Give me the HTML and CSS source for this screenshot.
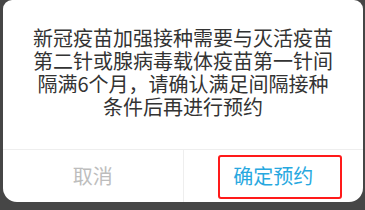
FILE: index.html
```html
<!DOCTYPE html>
<html lang="zh-CN">
<head>
<meta charset="utf-8">
<link rel="stylesheet" href="styles.css">
</head>
<body>
<div class="screen">
  <div class="dialog">
    <div class="message">新冠疫苗加强接种需要与灭活疫苗<br>第二针或腺病毒载体疫苗第一针间<br>隔满6个月，请确认满足间隔接种<br>条件后再进行预约</div>
    <div class="actions">
      <div class="btn cancel">取消</div>
      <div class="btn confirm">确定预约<span class="highlight"></span></div>
    </div>
  </div>
</div>
</body>
</html>
```

FILE: styles.css
```css
html, body {
  margin: 0;
  padding: 0;
}
body {
  width: 365px;
  height: 210px;
  background: #464646;
  font-family: "Noto Sans CJK SC", "Noto Sans", sans-serif;
  overflow: hidden;
}
.screen {
  padding: 0 2px 0 3px;
  height: 210px;
  box-sizing: border-box;
}
.dialog {
  background: #ffffff;
  height: 202px;
  border-radius: 9px 9px 14px 14px;
  display: flex;
  flex-direction: column;
}
.message {
  padding-top: 26px;
  height: 149px;
  box-sizing: border-box;
  font-size: 20px;
  line-height: 23px;
  color: #333333;
  text-align: center;
}
.actions {
  flex: 1;
  display: flex;
  border-top: 1px solid #eeeeee;
}
.btn {
  flex: 1;
  display: flex;
  align-items: center;
  justify-content: center;
  font-size: 20px;
  padding-bottom: 2px;
  position: relative;
}
.cancel {
  color: #bdbdbd;
  border-right: 1px solid #eeeeee;
}
.confirm {
  color: #27a8df;
}
.highlight {
  position: absolute;
  left: 34px;
  top: 5px;
  width: 124px;
  height: 44px;
  border: 2px solid #ff1a1a;
  border-radius: 3px;
  box-sizing: border-box;
}
```
